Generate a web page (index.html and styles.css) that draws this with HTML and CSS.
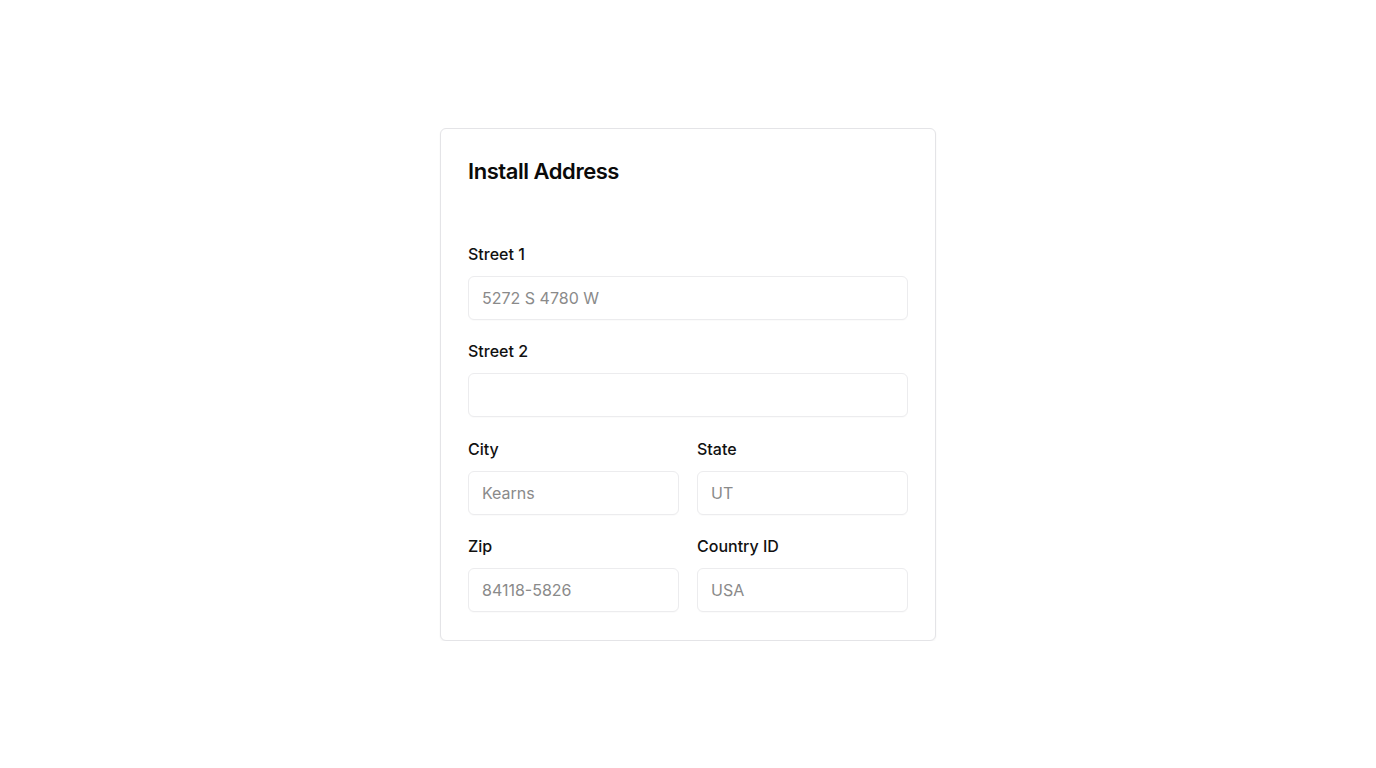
FILE: index.html
```html
<!DOCTYPE html>
<html lang="en">
<head>
<meta charset="utf-8">
<title>Install Address</title>
<link rel="stylesheet" href="styles.css">
</head>
<body>
<main class="page">
  <section class="card">
    <h2 class="card-title">Install Address</h2>
    <form class="form">
      <div class="field">
        <label class="label" for="s1">Street 1</label>
        <input class="input" id="s1" placeholder="5272 S 4780 W">
      </div>
      <div class="field">
        <label class="label" for="s2">Street 2</label>
        <input class="input" id="s2">
      </div>
      <div class="row">
        <div class="field">
          <label class="label" for="city">City</label>
          <input class="input" id="city" placeholder="Kearns">
        </div>
        <div class="field">
          <label class="label" for="state">State</label>
          <input class="input" id="state" placeholder="UT">
        </div>
      </div>
      <div class="row">
        <div class="field">
          <label class="label" for="zip">Zip</label>
          <input class="input" id="zip" placeholder="84118-5826">
        </div>
        <div class="field">
          <label class="label" for="country">Country ID</label>
          <input class="input" id="country" placeholder="USA">
        </div>
      </div>
    </form>
  </section>
</main>
</body>
</html>
```

FILE: styles.css
```css
* { box-sizing: border-box; }
html, body { margin: 0; padding: 0; background: #ffffff; }
body {
  font-family: Inter, "Noto Sans", sans-serif;
  color: #111111;
}
.page {
  display: flex;
  justify-content: center;
  padding-top: 128px;
}
.card {
  width: 496px;
  border: 1px solid #e4e4e7;
  border-radius: 6px;
  padding: 27px 27px 28px 27px;
  background: #fff;
  box-shadow: 0 1px 2px rgba(0,0,0,0.05);
}
.card-title {
  margin: 0;
  font-size: 22px;
  line-height: 30px;
  font-weight: 600;
  letter-spacing: -0.45px;
  color: #0a0a0a;
}
.form {
  margin-top: 56px;
  display: flex;
  flex-direction: column;
  gap: 19.4px;
}
.row {
  display: grid;
  grid-template-columns: 1fr 1fr;
  gap: 18px;
}
.field {
  display: flex;
  flex-direction: column;
  gap: 10px;
}
.label {
  font-size: 16px;
  line-height: 24px;
  font-weight: 500;
  color: #111;
}
.input {
  height: 44px;
  width: 100%;
  border: 1px solid #ececee;
  border-radius: 6px;
  padding: 0 13px;
  font-family: Inter, "Noto Sans", sans-serif;
  font-size: 16px;
  color: #111;
  background: #fff;
  outline: none;
  box-shadow: 0 1px 1px rgba(0,0,0,0.02);
}
.input::placeholder { color: #8a8a8a; }
```
